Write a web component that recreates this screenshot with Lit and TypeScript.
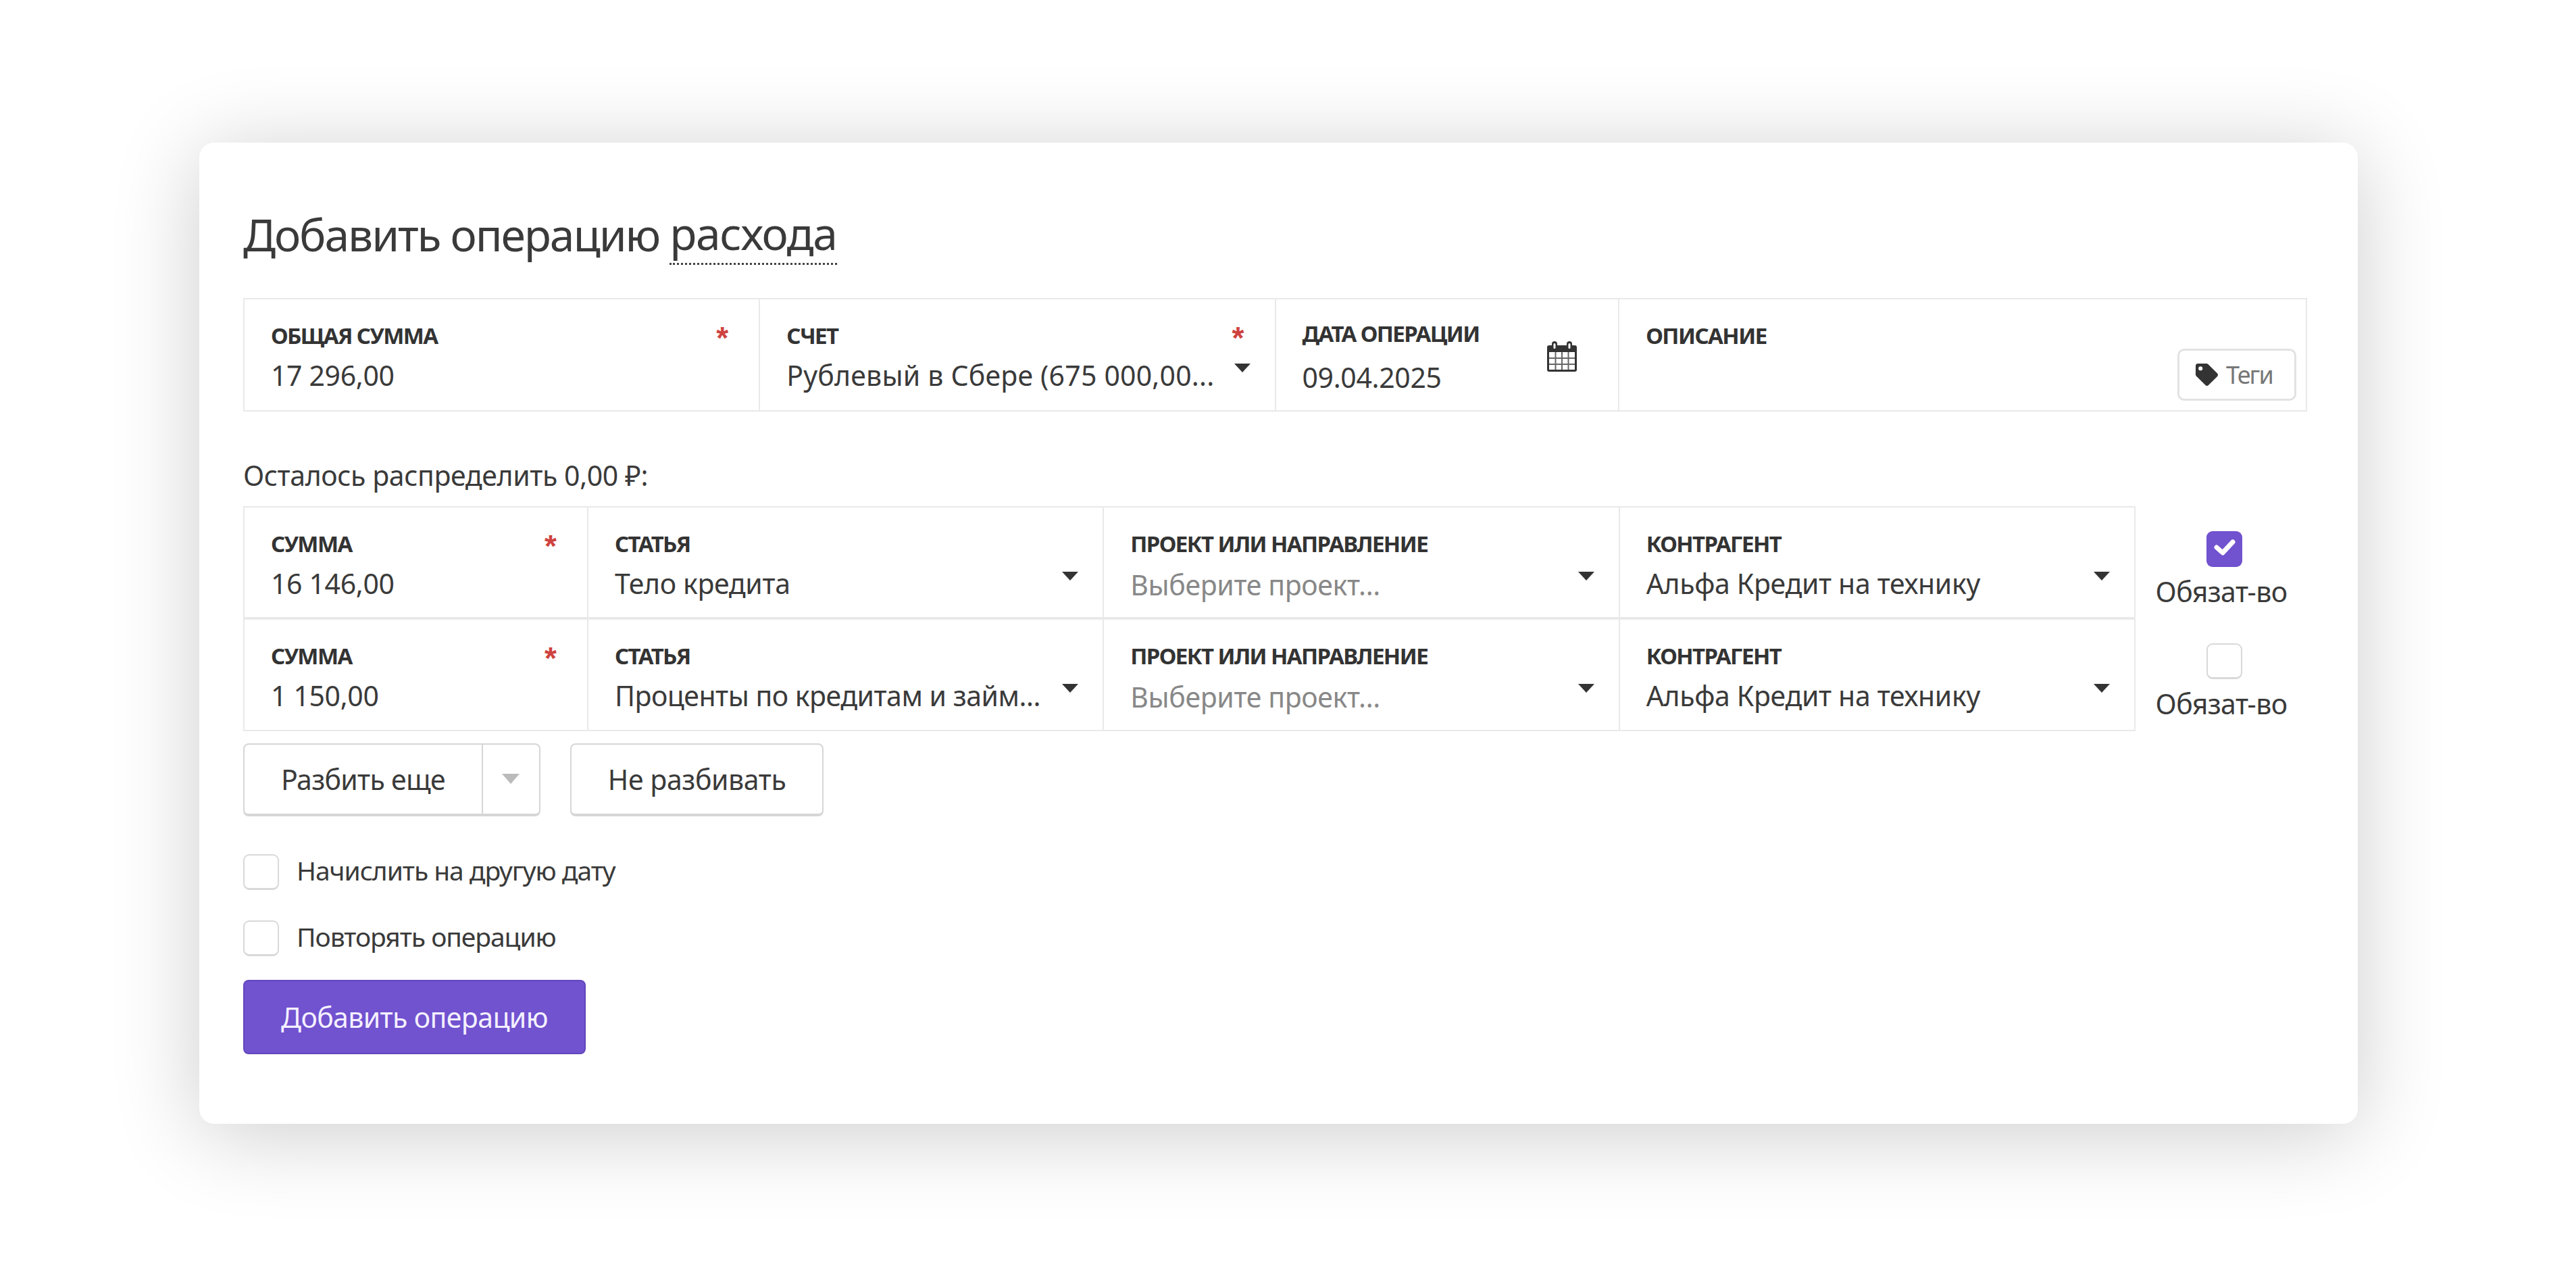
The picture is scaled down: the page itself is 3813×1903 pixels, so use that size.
import { LitElement, html, css, nothing } from "lit";
import { customElement } from "lit/decorators.js";

const caret = () => html`<span class="caret"></span>`;

@customElement("app-root")
export class AppRoot extends LitElement {
  static styles = css`
    :host { display: block; height: 1903px; background: #fff; overflow: hidden; font-family: "Noto Sans", sans-serif; color: #3a3a3a; font-size: 41px; letter-spacing: -0.35px; }
    * { box-sizing: border-box; }
    .page { padding: 211px 0 0 295px; }
    .card { width: 3195px; height: 1452px; background: #fff; border-radius: 22px; box-shadow: 0 14px 130px rgba(0,0,0,.2); padding: 95px 75px 0 65px; }
    h1 { margin: 0; height: 82px; font-weight: 400; font-size: 66px; line-height: 80px; letter-spacing: -2.1px; }
    .dotted { border-bottom: 3px dotted #444; display: inline-block; line-height: 76px; height: 86px; vertical-align: top; letter-spacing: -1.4px; }
    .table { display: grid; border-top: 2px solid #e9e9e9; border-left: 2px solid #e9e9e9; }
    .top { margin-top: 53px; width: 3055px; grid-template-columns: 3fr 3fr 2fr 4fr; }
    .top .cell { height: 165.5px; }
    .rest { margin-top: 64px; line-height: 60px; margin-bottom: 16px; letter-spacing: -0.4px; }
    .rows { display: grid; grid-template-columns: 2801px 254px; }
    .splits { grid-template-columns: 2fr 3fr 3fr 3fr; }
    .cell { position: relative; height: 164.5px; padding: 34px 40px 0 39px; border-right: 2px solid #e9e9e9; border-bottom: 2px solid #e9e9e9; min-width: 0; }
    .label { font-size: 33px; line-height: 40px; font-weight: 700; letter-spacing: -1.6px; text-transform: uppercase; color: #333; }
    .value { line-height: 50px; margin-top: 13px; white-space: nowrap; }
    .value.tight { letter-spacing: -0.5px; }
    .value.wide { letter-spacing: 0.2px; }
    .date .label { margin-top: -3px; }
    .date .value { margin-top: 19px; }
    .value.ph { color: #888; margin-top: 15px; }
    .req { position: absolute; right: 45px; top: 32px; color: #cf4240; font-size: 46px; font-weight: 700; line-height: 50px; letter-spacing: 0; font-family: "Liberation Sans", sans-serif; }
    .caret { position: absolute; right: 36px; top: 95px; width: 0; height: 0; border-left: 12px solid transparent; border-right: 12px solid transparent; border-top: 13px solid #333; }
    .cal { position: absolute; left: 401px; top: 62px; width: 44px; height: 45px; }
    .tags { position: absolute; right: 14px; top: 73px; width: 176px; height: 77px; border: 3px solid #e2e2e2; border-radius: 10px; display: flex; align-items: center; gap: 12px; padding-left: 24px; font-size: 36px; line-height: 50px; color: #777; letter-spacing: -1.9px; }
    .tags svg { width: 33px; height: 33px; flex: none; }
    .oblig { display: flex; flex-direction: column; align-items: center; height: 166.5px; padding-top: 37px; }
    .oblig .txt { margin-top: 11px; line-height: 50px; letter-spacing: -0.6px; }
    .oblig .box { margin-left: 8px; }
    .box { display: flex; align-items: center; justify-content: center; width: 53px; height: 53px; border: 2px solid #d9d9d9; border-bottom-width: 3px; border-radius: 9px; background: #fff; flex: none; }
    .box.on { background: #7152cf; border: 0; }
    .box svg { width: 53px; height: 53px; }
    .btns { display: flex; gap: 44px; margin-top: 18px; }
    .btn { height: 108px; line-height: 50px; border: 2px solid #d6d6d6; border-bottom-width: 4px; border-radius: 8px; display: flex; align-items: center; background: #fff; letter-spacing: -0.7px; }
    .btn.loose { letter-spacing: -0.4px; }
    .btn .t { padding: 0 54px; }
    .split { border-left: 2px solid #d6d6d6; height: 100%; width: 85px; display: flex; align-items: center; justify-content: center; }
    .split i { width: 0; height: 0; border-left: 13px solid transparent; border-right: 13px solid transparent; border-top: 15px solid #bbb; }
    .check { display: flex; align-items: center; gap: 26px; height: 53px; line-height: 50px; font-size: 39px; letter-spacing: -1.05px; }
    .check .lbl { margin-top: -4px; }
    .c1 { margin-top: 56px; }
    .c2 { margin-top: 45px; }
    .primary { margin-top: 35px; width: 507px; height: 110px; line-height: 50px; background: #7152cf; border: 2px solid #6246bd; border-radius: 8px; color: #f4f0ff; display: flex; align-items: center; justify-content: center; letter-spacing: -0.6px; }
  `;

  cell(label: string, value: string, o: { req?: boolean; caret?: boolean; ph?: boolean; tight?: boolean; wide?: boolean } = {}) {
    return html`<div class="cell">
      <div class="label">${label}</div>
      <div class="value ${o.ph ? "ph" : ""} ${o.tight ? "tight" : ""} ${o.wide ? "wide" : ""}">${value}</div>
      ${o.req ? html`<span class="req">*</span>` : nothing}
      ${o.caret ? caret() : nothing}
    </div>`;
  }

  row(sum: string, art: string, on: boolean, tight = false) {
    return html`<div class="table splits">
        ${this.cell("Сумма", sum, { req: true })}
        ${this.cell("Статья", art, { caret: true, tight })}
        ${this.cell("Проект или направление", "Выберите проект...", { caret: true, ph: true })}
        ${this.cell("Контрагент", "Альфа Кредит на технику", { caret: true })}
      </div>
      <div class="oblig">
        <span class="box ${on ? "on" : ""}">${on ? this.checkIcon() : nothing}</span>
        <span class="txt">Обязат-во</span>
      </div>`;
  }

  checkIcon() {
    return html`<svg viewBox="0 0 53 53"><path fill="none" stroke="#fff" stroke-width="7" stroke-linecap="round" stroke-linejoin="round" d="M15 24l9 8 15-16"/></svg>`;
  }

  render() {
    return html`<div class="page"><div class="card">
      <h1>Добавить операцию <span class="dotted">расхода</span></h1>
      <div class="table top">
        ${this.cell("Общая сумма", "17 296,00", { req: true })}
        ${this.cell("Счет", "Рублевый в Сбере (675 000,00...", { req: true, caret: true, wide: true })}
        <div class="cell date">
          <div class="label">Дата операции</div>
          <div class="value">09.04.2025</div>
          <svg class="cal" viewBox="0 0 44 45">
            <path fill="#333" fill-rule="evenodd" d="M3 6h38a3 3 0 0 1 3 3v33a3 3 0 0 1-3 3H3a3 3 0 0 1-3-3V9a3 3 0 0 1 3-3zM3 16v26h38V16z"/>
            <path fill="#666" d="M3 24h38v2H3zM3 33h38v2H3zM11.500 16h2v26h-2zM21 16h2v26h-2zM30.500 16h2v26h-2z"/>
            <rect x="7" y="0" width="8" height="13" rx="4" fill="#333"/>
            <rect x="29" y="0" width="8" height="13" rx="4" fill="#333"/>
            <rect x="9.500" y="3" width="3" height="8" rx="1.500" fill="#fff"/>
            <rect x="31.500" y="3" width="3" height="8" rx="1.500" fill="#fff"/>
          </svg>
        </div>
        <div class="cell">
          <div class="label">Описание</div>
          <div class="tags">
            <svg viewBox="0 0 512 512"><path fill="#333" d="M0 252.100V48C0 21.500 21.500 0 48 0h204.100a48 48 0 0 1 33.900 14.100l211.900 211.900c18.700 18.700 18.700 49.100 0 67.900L293.800 497.900c-18.700 18.700-49.100 18.700-67.900 0L14.100 286a48 48 0 0 1-14.100-33.900zM112 64a48 48 0 1 0 0 96 48 48 0 0 0 0-96z"/></svg>
            <span>Теги</span>
          </div>
        </div>
      </div>
      <div class="rest">Осталось распределить 0,00 ₽:</div>
      <div class="rows">
        ${this.row("16 146,00", "Тело кредита", true)}
        ${this.row("1 150,00", "Проценты по кредитам и займ...", false, true)}
      </div>
      <div class="btns">
        <div class="btn"><span class="t">Разбить еще</span><span class="split"><i></i></span></div>
        <div class="btn loose"><span class="t">Не разбивать</span></div>
      </div>
      <div class="check c1"><span class="box"></span><span class="lbl">Начислить на другую дату</span></div>
      <div class="check c2"><span class="box"></span><span class="lbl">Повторять операцию</span></div>
      <div class="primary">Добавить операцию</div>
    </div></div>`;
  }
}
